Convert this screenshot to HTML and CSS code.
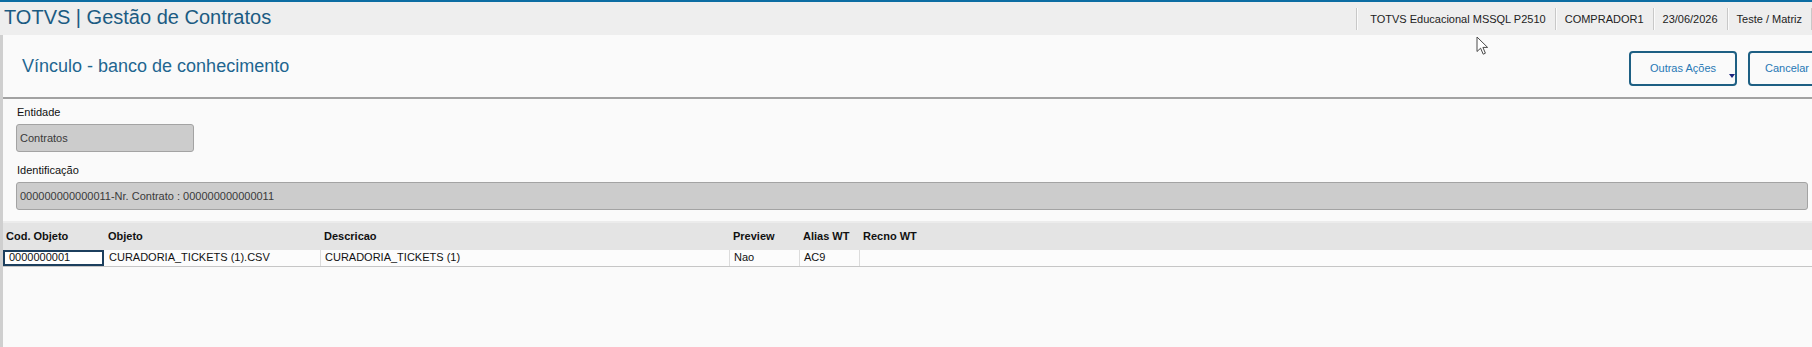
FILE: index.html
```html
<!DOCTYPE html>
<html lang="pt-BR">
<head>
<meta charset="utf-8">
<title>Vínculo - banco de conhecimento</title>
<link rel="stylesheet" href="styles.css">
</head>
<body>
<header class="topbar">
  <div class="app-title">TOTVS | Gestão de Contratos</div>
  <div class="info">
    <span class="info-item first">TOTVS Educacional MSSQL P2510</span>
    <span class="info-item">COMPRADOR1</span>
    <span class="info-item">23/06/2026</span>
    <span class="info-item last">Teste / Matriz</span>
  </div>
</header>
<main class="page">
  <div class="page-head">
    <h1 class="page-title">Vínculo - banco de conhecimento</h1>
    <div class="actions">
      <button class="btn btn-menu">Outras Ações<span class="caret"></span></button>
      <button class="btn">Cancelar</button>
    </div>
  </div>
  <section class="form">
    <label class="lbl">Entidade</label>
    <div class="field short">Contratos</div>
    <label class="lbl second">Identificação</label>
    <div class="field">000000000000011-Nr. Contrato : 000000000000011</div>
  </section>
  <section class="grid">
    <div class="th">Cod. Objeto</div>
    <div class="th">Objeto</div>
    <div class="th">Descricao</div>
    <div class="th">Preview</div>
    <div class="th">Alias WT</div>
    <div class="th">Recno WT</div>
    <div class="td sel"><span>0000000001</span></div>
    <div class="td">CURADORIA_TICKETS (1).CSV</div>
    <div class="td">CURADORIA_TICKETS (1)</div>
    <div class="td">Nao</div>
    <div class="td">AC9</div>
    <div class="td last"></div>
  </section>
</main>
<svg class="cursor" width="13" height="20" viewBox="0 0 13 20"><path d="M1 1 L1 15.5 L4.6 12.2 L7.2 18.2 L9.4 17.2 L6.9 11.4 L11.6 11.4 Z" fill="#fff" stroke="#4a4a4a" stroke-width="1" stroke-linejoin="round"/></svg>
</body>
</html>
```
FILE: styles.css
```css
* { box-sizing: border-box; }
html, body { margin: 0; padding: 0; }
body {
  width: 1812px;
  height: 347px;
  overflow: hidden;
  background: #fafafa;
  font-family: "Liberation Sans", Arial, sans-serif;
  color: #111;
  position: relative;
}
.topbar {
  height: 35px;
  border-top: 2px solid #0c6da3;
  background: #eeeeee;
  display: flex;
  align-items: center;
  justify-content: space-between;
}
.app-title {
  font-size: 20px;
  color: #1b5b82;
  padding-left: 4px;
  line-height: 24px;
  margin-top: -3px;
}
.info { display: flex; align-items: center; }
.info-item {
  font-size: 11px;
  color: #222;
  height: 22px;
  line-height: 22px;
  padding: 0 9px;
  border-left: 1px solid #c8c8c8;
  box-shadow: inset 1px 0 0 #fbfbfb;
}
.info-item.first { padding-left: 13px; }
.info-item.last { border-right: 1px solid #c8c8c8; }
.page {
  border-left: 3px solid #cfcfcf;
  min-height: 312px;
}
.page-head {
  height: 64px;
  display: flex;
  align-items: center;
  justify-content: space-between;
  border-bottom: 2px solid #a2a2a2;
}
.page-title {
  margin: 0;
  padding-left: 19px;
  font-size: 18px;
  font-weight: normal;
  color: #1f6690;
}
.actions {
  display: flex;
  gap: 11px;
  margin-right: -14px;
  margin-top: 4px;
}
.btn {
  position: relative;
  height: 35px;
  width: 78px;
  border: 2px solid #1d5f83;
  border-radius: 4px;
  background: #fafafa;
  color: #2778b5;
  font-family: "Liberation Sans", Arial, sans-serif;
  font-size: 11px;
  padding: 0;
  text-align: center;
  white-space: nowrap;
}
.btn-menu { width: 108px; }
.caret {
  position: absolute;
  right: 0;
  bottom: 6px;
  width: 0;
  height: 0;
  border-left: 3.5px solid transparent;
  border-right: 3.5px solid transparent;
  border-top: 4px solid #1a237e;
}
.form {
  display: flex;
  flex-direction: column;
  padding: 6px 4px 0 13px;
}
.lbl {
  font-size: 11px;
  line-height: 14px;
  color: #111;
  padding-left: 1px;
  margin-bottom: 5px;
}
.lbl.second { margin-top: 11px; }
.field {
  height: 28px;
  background: #cccccc;
  border: 1px solid #a3a3a3;
  border-radius: 3px;
  font-size: 11px;
  color: #3a3a3a;
  line-height: 26px;
  padding-left: 3px;
}
.field.short { width: 178px; }
.grid {
  margin-top: 11px;
  display: grid;
  grid-template-columns: 102px 216px 409px 70px 60px 1fr;
  grid-template-rows: 29px 16px;
  border-bottom: 1px solid #c6c6c6;
}
.th {
  background: #e4e4e4;
  border-top: 2px solid #ececec;
  font-size: 11px;
  font-weight: bold;
  color: #111;
  padding-left: 3px;
  line-height: 27px;
}
.td {
  font-size: 11px;
  color: #111;
  line-height: 15px;
  padding-left: 4px;
  border-right: 1px solid #dcdcdc;
  background: #fcfcfc;
  white-space: nowrap;
}
.td.last { border-right: none; }
.td.sel {
  padding: 0;
  border-right: none;
  display: flex;
}
.td.sel span {
  flex: 1;
  border: 2px solid #1c3f5e;
  line-height: 11px;
  padding-left: 4px;
  margin-right: 1px;
  background: #fff;
}
.cursor {
  position: absolute;
  left: 1476px;
  top: 36px;
}
```
